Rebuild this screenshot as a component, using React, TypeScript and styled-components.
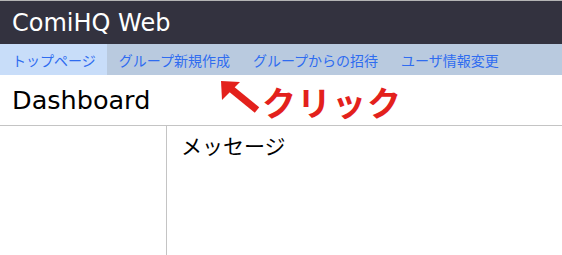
import React from 'react';
import styled, { createGlobalStyle } from 'styled-components';

const GlobalStyle = createGlobalStyle`
  html, body {
    margin: 0;
    padding: 0;
    background: #ffffff;
  }
  body {
    font-family: 'DejaVu Sans', 'Noto Sans CJK JP', sans-serif;
  }
`;

const Page = styled.div`
  width: 562px;
  height: 255px;
  border-top: 1px solid #b4b4b4;
  box-sizing: border-box;
  display: flex;
  flex-direction: column;
  overflow: hidden;
  position: relative;
`;

const Header = styled.header`
  height: 43px;
  background: #33323f;
  color: #ffffff;
  display: flex;
  align-items: center;
  padding-left: 12px;
  font-size: 24px;
`;

const Nav = styled.nav`
  height: 31px;
  background: #b9cadf;
  display: flex;
`;

const NavItem = styled.a<{ $active?: boolean }>`
  display: flex;
  align-items: center;
  padding: 0 11px 0 12px;
  background: ${(p) => (p.$active ? '#c8ddf9' : 'transparent')};
  color: #2f6cf0;
  font-family: 'Noto Sans CJK JP', sans-serif;
  font-size: 14px;
  text-decoration: none;
`;

const TitleRow = styled.div`
  height: 50px;
  display: flex;
  align-items: center;
  padding-left: 12px;
  border-bottom: 1px solid #c4c4c4;
  font-size: 25.5px;
  color: #000000;
`;

const Body = styled.div`
  flex: 1;
  display: grid;
  grid-template-columns: 167px 1fr;
`;

const SideColumn = styled.aside`
  border-right: 1px solid #c4c4c4;
`;

const Main = styled.main`
  padding: 4px 14px;
  font-family: 'Noto Sans CJK JP', sans-serif;
  font-size: 21px;
  color: #000000;
`;

const Callout = styled.div`
  position: absolute;
  left: 218px;
  top: 77px;
  display: flex;
  align-items: flex-start;
`;

const CalloutText = styled.span`
  margin-left: 2px;
  margin-top: 3px;
  font-family: 'Noto Sans CJK JP', sans-serif;
  font-weight: 700;
  font-size: 34px;
  line-height: 42px;
  color: #e3211c;
  letter-spacing: 1px;
`;

function Arrow() {
  return (
    <svg width="42" height="36" viewBox="0 0 42 36">
      <path d="M39 32 L12 10" stroke="#e3211c" strokeWidth="7" />
      <path d="M3 3 L22 4 L4 22 Z" fill="#e3211c" />
    </svg>
  );
}

function App() {
  return (
    <>
      <GlobalStyle />
      <Page>
        <Header>ComiHQ Web</Header>
        <Nav>
          <NavItem $active>トップページ</NavItem>
          <NavItem>グループ新規作成</NavItem>
          <NavItem>グループからの招待</NavItem>
          <NavItem>ユーザ情報変更</NavItem>
        </Nav>
        <TitleRow>Dashboard</TitleRow>
        <Body>
          <SideColumn />
          <Main>メッセージ</Main>
        </Body>
        <Callout>
          <Arrow />
          <CalloutText>クリック</CalloutText>
        </Callout>
      </Page>
    </>
  );
}

export default App;
